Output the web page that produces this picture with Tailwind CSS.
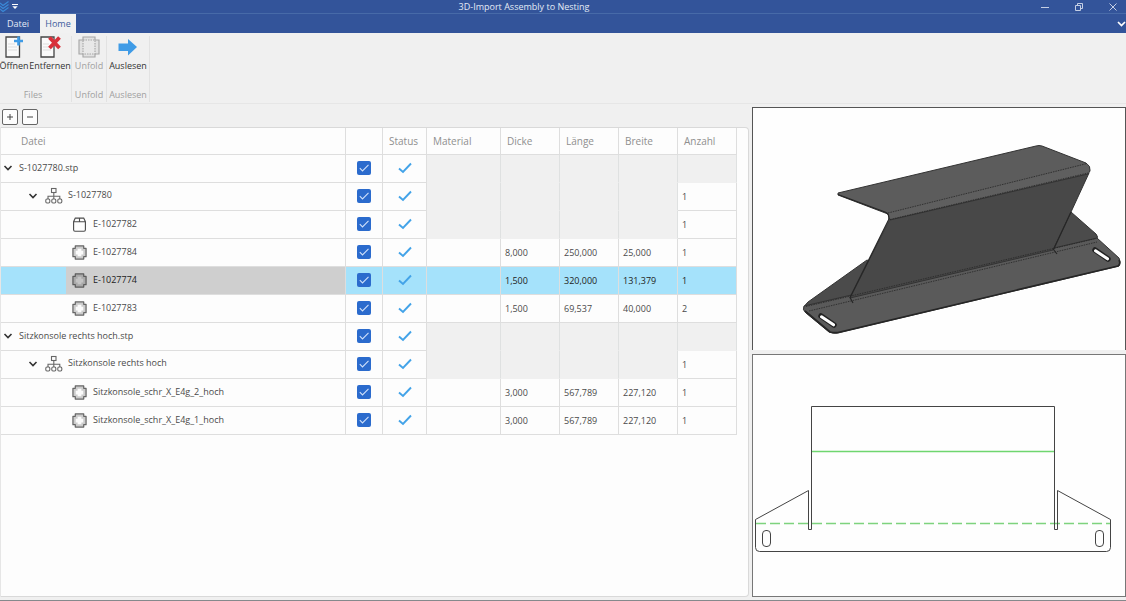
<!DOCTYPE html>
<html lang="de">
<head>
<meta charset="utf-8">
<title>3D-Import Assembly to Nesting</title>
<script src="https://cdn.jsdelivr.net/npm/@tailwindcss/browser@4"></script>
</head>
<body class="flex h-screen flex-col overflow-hidden border-b border-[#85898c] bg-[#f0f0f0] font-['Open_Sans','Noto_Sans',sans-serif] text-[9px] leading-[14px] text-[#4a4a4a]">

<svg class="hidden">
  <symbol id="chevron" viewBox="0 0 10 8"><path d="M1.500 2 5 5.500 8.500 2" fill="none" stroke="#333" stroke-width="1.600"/></symbol>
  <symbol id="assembly" viewBox="0 0 18 18"><g fill="none" stroke="#666" stroke-width="1.100"><rect x="6.500" y="1.500" width="4.500" height="4"/><path d="M8.800 5.500V12M3 12V9.200H14.800V12"/><rect x=".8" y="12" width="4" height="4" rx="1.200"/><rect x="6.800" y="12" width="4" height="4" rx="1.200"/><rect x="12.800" y="12" width="4" height="4" rx="1.200"/></g></symbol>
  <symbol id="box" viewBox="0 0 16 16"><path d="M1.700 5V13.500Q1.700 15.200 3.200 15.200H12.800Q14.300 15.200 14.300 13.500V5L12.500 1.200H3.500ZM1.700 5H14.300M8 1.200V5" fill="none" stroke="#4c4c4c" stroke-width="1.200"/></symbol>
  <symbol id="sheet" viewBox="0 0 16 16"><path d="M3.500 1H12.500V3.500H15V12.500H12.500V15H3.500V12.500H1V3.500H3.500Z" fill="#ccc" stroke="#666" stroke-width="1.300" stroke-linejoin="round"/><path d="M6 4H10V6H12V10H10V12H6V10H4V6H6Z" fill="#fbfbfb"/></symbol>
  <symbol id="sheet-selected" viewBox="0 0 16 16"><path d="M3.500 1H12.500V3.500H15V12.500H12.500V15H3.500V12.500H1V3.500H3.500Z" fill="#a8a8a8" stroke="#5c5c5c" stroke-width="1.300" stroke-linejoin="round"/><path d="M6 4H10V6H12V10H10V12H6V10H4V6H6Z" fill="#c4c4c4"/></symbol>
  <symbol id="done" viewBox="0 0 14 12"><path d="M1 6.500 5 10 13 1.500" fill="none" stroke="#43a3e8" stroke-width="1.900"/></symbol>
  <symbol id="tick" viewBox="0 0 14 14"><path d="M2.800 7.200 5.500 9.900 11.500 3.900" fill="none" stroke="#cfe0fa" stroke-width="1.100"/></symbol>
</svg>

<header class="bg-[#33549a] text-white">
  <div class="grid h-[14px] grid-cols-[1fr_auto_1fr] items-center border-b border-[#476aa8]">
    <div class="flex items-center gap-[3px]">
      <svg class="h-[12px] w-[9px]" viewBox="0 0 9 12"><path d="M0 2 3 4.500 8.500 .5M0 5 3 7.500 8.500 3.500M0 8 3 10.500 8.500 6.500" fill="none" stroke="#3b8ad8" stroke-width="1.100"/></svg>
      <button aria-label="Schnellzugriff anpassen"><svg class="block h-[6px] w-[6px]" viewBox="0 0 6 6"><path d="M0 .5H6" stroke="#fff"/><path d="M.3 2.300H5.700L3 5Z" fill="#fff"/></svg></button>
    </div>
    <h1 class="pr-[78px] leading-[13px] text-[#e4eaf5]">3D-Import Assembly to Nesting</h1>
    <div class="flex items-center justify-end gap-[26px] pr-[9px]">
      <button aria-label="Minimieren"><svg class="block size-[8px]" viewBox="0 0 8 8"><path d="M0 4.500H8" stroke="#c5cfe4"/></svg></button>
      <button aria-label="Wiederherstellen"><svg class="block size-[8px]" viewBox="0 0 8 8"><path d="M.5 2.500H5.500V7.500H.5ZM2.500 2.500V.5H7.500V5.500H5.500" fill="none" stroke="#c5cfe4"/></svg></button>
      <button aria-label="Schließen"><svg class="block size-[8px]" viewBox="0 0 8 8"><path d="M.5.5 7.500 7.500M7.500.5.5 7.500" stroke="#c5cfe4"/></svg></button>
    </div>
  </div>
  <nav class="flex h-[19px] items-stretch">
    <button class="w-[40px] pr-[4px] text-[#e4eaf5]">Datei</button>
    <button class="w-[36px] bg-[#f1f1f1] text-[#3d5c9d]">Home</button>
    <button class="ml-auto" aria-label="Menüband einklappen"><svg class="block h-[6px] w-[9px]" viewBox="0 0 9 6"><path d="M1 1 4.500 4.500 8 1" fill="none" stroke="#fff" stroke-width="1.700"/></svg></button>
  </nav>
</header>

<section class="flex h-[71px] shrink-0 border-b border-[#e6e6e6] pt-[3px] pb-[1px] text-center text-[#333]">
  <div class="flex w-[72px] flex-col justify-between border-r border-[#e2e2e2]">
    <div class="flex gap-[1px]">
      <button class="flex w-[28px] flex-col items-center">
        <svg class="h-[22px] w-[20px]" viewBox="0 0 20 22"><path d="M2 1H15.500V21H2Z" fill="#fafafa" stroke="#444" stroke-width="1.300"/><path d="M4 8H11M4 11H13M4 14H13" stroke="#ddd"/><path d="M14.500.5V9.500M10 5H19" stroke="#3f9be6" stroke-width="2.600"/></svg>
        <span class="leading-[16px]">Öffnen</span>
      </button>
      <button class="flex w-[42px] flex-col items-center">
        <svg class="h-[22px] w-[22px]" viewBox="0 0 22 22"><path d="M2 1H15V21H2Z" fill="#fafafa" stroke="#444" stroke-width="1.300"/><path d="M4 8H10M4 11H12M4 14H12" stroke="#ddd"/><path d="M10.500 1.500 20.500 12M20.500 1.500 10.500 12" stroke="#d8303a" stroke-width="3.800"/></svg>
        <span class="leading-[16px]">Entfernen</span>
      </button>
    </div>
    <div class="pr-[5px] text-[#a0a0a0]">Files</div>
  </div>
  <div class="flex w-[35px] flex-col items-center justify-between border-r border-[#e2e2e2] text-[#a0a0a0]">
    <button class="flex flex-col items-center" disabled>
      <svg class="size-[22px]" viewBox="0 0 22 22"><g fill="#e2e2e2" stroke="#a5a5a5" stroke-width="1.100"><path d="M5 1H17V4H21V18H17V21H5V18H1V4H5Z"/><path d="M5 4H17V18H5Z" fill="#e8e8e8" stroke-dasharray="1.500 1"/></g></svg>
      <span class="leading-[16px]">Unfold</span>
    </button>
    <div>Unfold</div>
  </div>
  <div class="flex w-[43px] flex-col items-center justify-between border-r border-[#e2e2e2]">
    <button class="flex flex-col items-center">
      <svg class="size-[22px]" viewBox="0 0 22 22"><path d="M1.500 7.500H11V3L20 11 11 19.500V15H1.500Z" fill="#3f9be6"/></svg>
      <span class="leading-[16px]">Auslesen</span>
    </button>
    <div class="text-[#a0a0a0]">Auslesen</div>
  </div>
</section>

<main class="grid min-h-0 flex-1 grid-cols-[752fr_374fr] pb-[3px]">
  <section class="flex min-w-0 flex-col pr-[3px]">
    <div class="flex h-[23px] items-center gap-[4px] pt-[3px] pl-[2px]">
      <button class="rounded-[2px] border border-[#666] bg-[#fdfdfd]" aria-label="Alle aufklappen"><svg class="block size-[14px]" viewBox="0 0 14 14"><path d="M4 7H10M7 4V10" stroke="#444"/></svg></button>
      <button class="rounded-[2px] border border-[#666] bg-[#fdfdfd]" aria-label="Alle zuklappen"><svg class="block size-[14px]" viewBox="0 0 14 14"><path d="M4 7H10" stroke="#444"/></svg></button>
    </div>
    <div class="flex-1 rounded-r-[4px] border border-[#d9d9d9] border-l-[#e6e6e6] bg-[#fdfdfd] pr-[11px]">
      <table class="w-full table-fixed border-separate border-spacing-0">
        <colgroup><col><col class="w-[37px]"><col class="w-[44px]"><col class="w-[74px]"><col class="w-[59px]"><col class="w-[59px]"><col class="w-[59px]"><col class="w-[59px]"></colgroup>
        <thead>
          <tr class="h-[27px] text-left text-[10px] text-[#8f8f8f] *:border-r *:border-b *:border-[#dedede] *:pl-[6px] *:font-normal">
            <th><span class="pl-[14px]">Datei</span></th><th aria-label="Auswahl"></th><th>Status</th><th>Material</th><th>Dicke</th><th>Länge</th><th>Breite</th><th>Anzahl</th>
          </tr>
        </thead>
        <tbody id="parts"></tbody>
      </table>
    </div>
  </section>

  <section class="grid min-h-0 grid-rows-2 gap-[4px] pt-[3px]">
    <figure class="min-h-0 border border-b-0 border-[#555] bg-[#fefefe]">
      <svg class="block size-full" viewBox="753 108 372 242" role="img" aria-label="3D-Ansicht">
        <g stroke="#333" stroke-width="1" stroke-linejoin="round">
          <path d="M1071 212 1096 234Q1099 237 1096 240L1053 251 1058 230Z" fill="#4b4b4b"/>
          <path d="M867 260 808 302Q803 306 804 310L850 299 872 262Z" fill="#4b4b4b"/>
          <path d="M804 306 1097 238 1119 258Q1121 262 1119 266L838 333Q833 334 829 332L806 313Q802 310 804 306Z" fill="#5a5a5a"/>
          <path d="M890 219 1089 173 1071 212 1053 250 850 298 889 221Z" fill="#484848"/>
          <path d="M838 193 1036 146Q1039 145 1042 146L1086 163Q1091 166 1090 171L1088 174 890 220 888 214 838 195Z" fill="#5c5c5c"/>
          <path d="M888 213 1087 164Q1091 168 1088 173L890 219Z" fill="#5f5f5f" stroke="none"/>
        </g>
        <g fill="none" stroke="#262626">
          <path d="M888 213 1087 163.500M890 219.500 1088 173M806 306.500 1096 238.500M809 311 1097 242" stroke-width=".8" stroke-dasharray="1.500 1"/>
          <path d="M838 194.500 885 212Q890 214 888.500 220L850 297.500 853 303M1071 212 1053.500 249.500 1057 254" stroke-width="1.200"/>
          <path d="M805 311 830 332Q834 333 838 332.500L1118 266Q1121 264 1119 260" stroke-width="1.700"/>
        </g>
        <g stroke-linecap="round"><path d="M821 316 834 325M1095 250 1108 259" stroke="#222" stroke-width="5.500"/><path d="M821.500 316.800 833.500 324.800M1095.500 250.800 1107.500 258.800" stroke="#fefefe" stroke-width="3"/></g>
      </svg>
    </figure>
    <figure class="min-h-0 border border-[#777] bg-[#fefefe]">
      <svg class="block size-full" viewBox="753 355 372 241" role="img" aria-label="Abwicklung">
        <path d="M811.500 451.500H1054.500" stroke="#6fd66f" stroke-width="1.300"/>
        <path d="M756 523.500H1110" stroke="#7ed37e" stroke-width="1.300" stroke-dasharray="10 4"/>
        <g fill="none" stroke="#444"><path d="M811.500 529.500V406.500H1054.500V529.500H1057.500V490.500L1110.500 519.500V547.500Q1110.500 551.500 1106.500 551.500H759.500Q755.500 551.500 755.500 547.500V519.500L808.500 490.500V529.500Z"/><rect x="762.500" y="530.500" width="8" height="16" rx="3.500"/><rect x="1095.500" y="530.500" width="8" height="16" rx="3.500"/></g>
      </svg>
    </figure>
  </section>
</main>

<script>
  // kind, name, Dicke, Länge, Breite, Anzahl, selected
  const parts = [
    ['file', 'S-1027780.stp'],
    ['assembly', 'S-1027780', '', '', '', '1'],
    ['box', 'E-1027782', '', '', '', '1'],
    ['sheet', 'E-1027784', '8,000', '250,000', '25,000', '1'],
    ['sheet', 'E-1027774', '1,500', '320,000', '131,379', '1', true],
    ['sheet', 'E-1027783', '1,500', '69,537', '40,000', '2'],
    ['file', 'Sitzkonsole rechts hoch.stp'],
    ['assembly', 'Sitzkonsole rechts hoch', '', '', '', '1'],
    ['sheet', 'Sitzkonsole_schr_X_E4g_2_hoch', '3,000', '567,789', '227,120', '1'],
    ['sheet', 'Sitzkonsole_schr_X_E4g_1_hoch', '3,000', '567,789', '227,120', '1'],
  ];
  const expander = '<button class="shrink-0" aria-label="Auf-/Zuklappen"><svg class="block h-[8px] w-[10px]"><use href="#chevron"/></svg></button>';
  const leaf = (n, icon, bg) => `<div class="ml-[65px] flex h-[27px] items-center gap-[6px] pl-[6px] ${bg}"><svg class="size-[15px]"><use href="#${icon}"/></svg><span class="pb-[2px]">${n}</span></div>`;
  const label = {
    file: n => `<div class="flex items-center gap-[6px] pb-[1px] pl-[2px]">${expander}<span>${n}</span></div>`,
    assembly: n => `<div class="flex items-center pb-[1px] pl-[27px]">${expander}<svg class="ml-[7px] size-[18px]"><use href="#assembly"/></svg><span class="pb-[2px] pl-[5px]">${n}</span></div>`,
    box: n => leaf(n, 'box', ''),
    sheet: (n, sel) => sel ? leaf(n, 'sheet-selected', 'bg-[#cfcfcf]') : leaf(n, 'sheet', ''),
  };
  const line = 'border-r border-b border-[#dedede]';
  const cell = (v, empty) => empty
    ? '<td class="border-r border-b border-r-[#dfe1e1] border-b-[#f0f0f0] bg-[#f0f0f0]"></td>'
    : `<td class="${line} p-0 pt-[1px] pl-[4px]">${v}</td>`;
  document.getElementById('parts').innerHTML = parts.map(([kind, name, d = '', l = '', b = '', count, sel]) => {
    const group = kind !== 'sheet';
    return `<tr class="h-[28px] ${sel ? 'bg-[#a5e2fb] text-[#222]' : ''}">
      <td class="${line} p-0 whitespace-nowrap">${label[kind](name, sel)}</td>
      <td class="${line} p-0 pb-[1px]"><label class="grid place-items-center"><input type="checkbox" checked aria-label="${name}" class="col-start-1 row-start-1 size-[14px] appearance-none rounded-[2px] bg-[#2b6bcd]"><svg class="pointer-events-none col-start-1 row-start-1 size-[14px]"><use href="#tick"/></svg></label></td>
      <td class="${line} p-0 pb-[1px]"><svg class="mx-auto block h-[12px] w-[14px]"><use href="#done"/></svg></td>
      ${cell('', group)}${cell(d, group)}${cell(l, group)}${cell(b, group)}${cell(count, count === undefined)}
    </tr>`;
  }).join('');
</script>
</body>
</html>
